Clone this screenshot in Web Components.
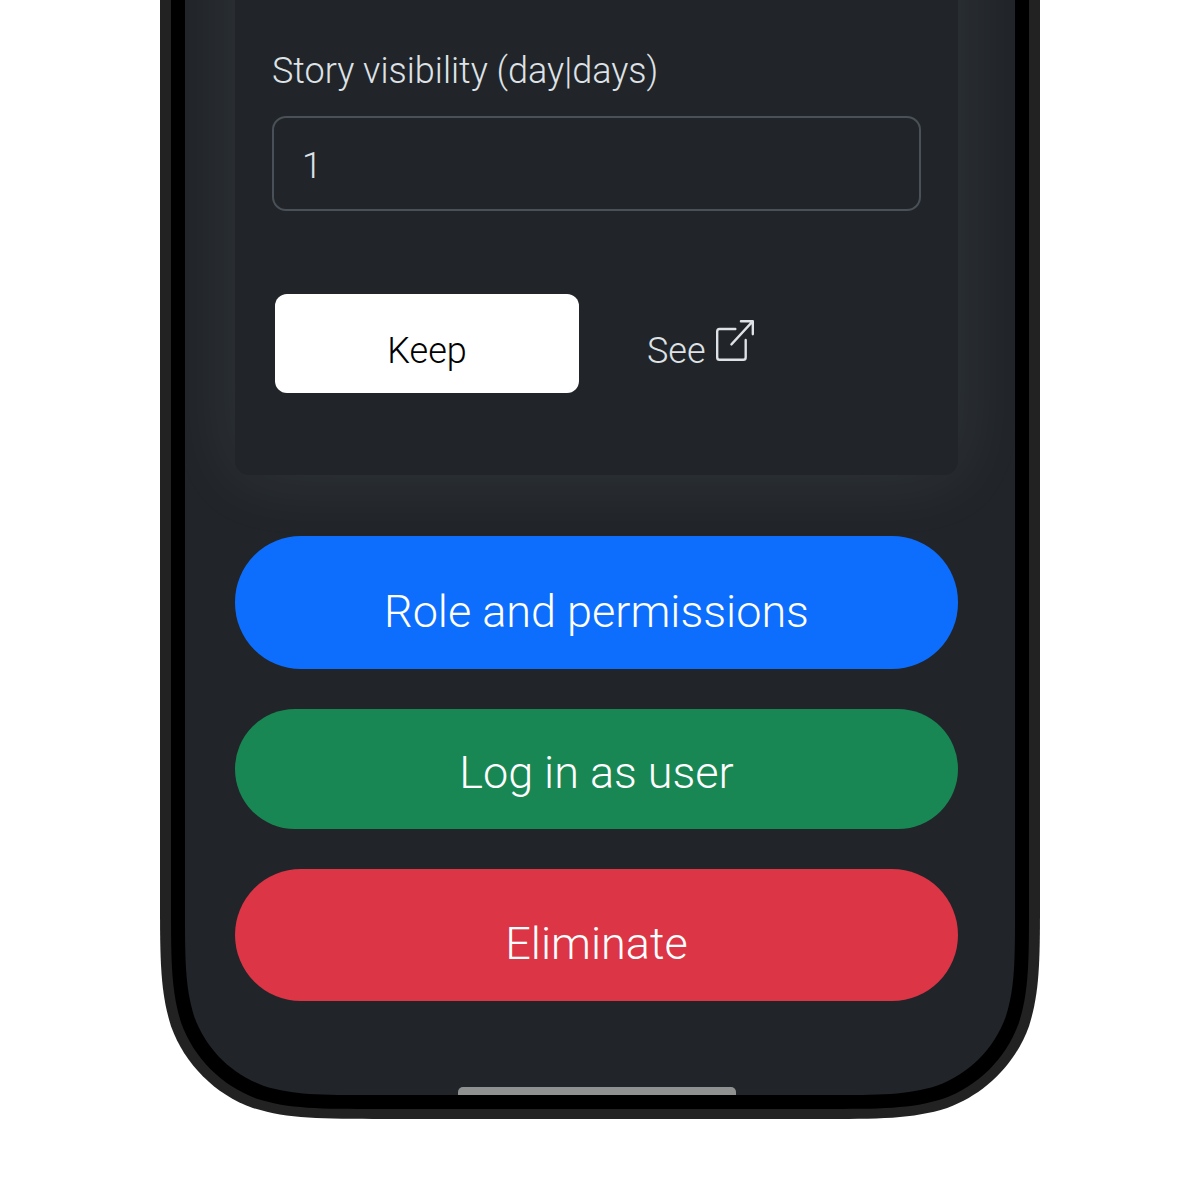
<!DOCTYPE html>
<html lang="en">
<head>
<meta charset="utf-8">
<meta name="viewport" content="width=device-width, initial-scale=1">
<title>User settings</title>
<style>
  body { margin: 0; background: #fff; color: #dee2e6; font-family: Roboto, "Liberation Sans", sans-serif; font-weight: 350; }
</style>
</head>
<body>
<phone-frame>
  <settings-card>
    <text-field label="Story visibility (day|days)" value="1"></text-field>
    <card-actions></card-actions>
  </settings-card>
  <button-stack>
    <pill-button tone="primary">Role and permissions</pill-button>
    <pill-button tone="success">Log in as user</pill-button>
    <pill-button tone="danger">Eliminate</pill-button>
  </button-stack>
</phone-frame>

<script>
  const define = (name, markup, setup) => {
    const template = document.createElement('template');
    template.innerHTML = markup;
    customElements.define(name, class extends HTMLElement {
      constructor() {
        super();
        this.attachShadow({ mode: 'open' }).append(template.content.cloneNode(true));
      }
      connectedCallback() {
        if (setup) setup(this, this.shadowRoot);
      }
    });
  };

  define('phone-frame', `
    <style>
      :host { display: block; box-sizing: border-box; width: min(100%, 880px); margin: 0 auto 80px; }
      .shell { --r: 147px; padding: 0 11px 10px; background: #222; }
      .bezel { --r: 136px; padding: 0 14px 14px; background: #000; }
      .screen { --r: 124px; display: flex; flex-direction: column; overflow: hidden; padding: 0 57px 0 50px; background: #212529; }
      .shell, .bezel, .screen { border-radius: 0 0 var(--r) var(--r); }
      .home { align-self: center; width: 278px; height: 8px; margin-top: 86px; background: #8f9191; border-radius: 5px 5px 0 0; }
      /* Continuous-curvature corners: three curves each, scaled by --r. */
      @supports (clip-path: shape(from 0 0, line to 1px 1px)) {
        .shell, .bezel, .screen {
          border-radius: 0;
          clip-path: shape(from 0 0,
            line to 100% 0,
            line to 100% calc(100% - 1.5287 * var(--r)),
            curve to calc(100% - 0.0749 * var(--r)) calc(100% - 0.6315 * var(--r)) with 100% calc(100% - 1.0884 * var(--r)) / 100% calc(100% - 0.8684 * var(--r)),
            curve to calc(100% - 0.6315 * var(--r)) calc(100% - 0.0749 * var(--r)) with calc(100% - 0.1691 * var(--r)) calc(100% - 0.3724 * var(--r)) / calc(100% - 0.3724 * var(--r)) calc(100% - 0.1691 * var(--r)),
            curve to calc(100% - 1.5287 * var(--r)) 100% with calc(100% - 0.8684 * var(--r)) 100% / calc(100% - 1.0884 * var(--r)) 100%,
            line to calc(1.5287 * var(--r)) 100%,
            curve to calc(0.6315 * var(--r)) calc(100% - 0.0749 * var(--r)) with calc(1.0884 * var(--r)) 100% / calc(0.8684 * var(--r)) 100%,
            curve to calc(0.0749 * var(--r)) calc(100% - 0.6315 * var(--r)) with calc(0.3724 * var(--r)) calc(100% - 0.1691 * var(--r)) / calc(0.1691 * var(--r)) calc(100% - 0.3724 * var(--r)),
            curve to 0 calc(100% - 1.5287 * var(--r)) with 0 calc(100% - 0.8684 * var(--r)) / 0 calc(100% - 1.0884 * var(--r)),
            close);
        }
      }
    </style>
    <div class="shell"><div class="bezel"><main class="screen">
      <slot></slot>
      <div class="home"></div>
    </main></div></div>
  `);

  define('settings-card', `
    <style>
      :host { display: flex; flex-direction: column; gap: 83px; margin-top: -100px; padding: 145px 37px 82px; background: #212529; border-radius: 14px; box-shadow: 0 0 72px rgba(225, 228, 255, .09); }
    </style>
    <slot></slot>
  `);

  define('text-field', `
    <style>
      :host { display: flex; flex-direction: column; gap: 19px; }
      label { font-size: 36px; line-height: 52px; white-space: nowrap; }
      input { box-sizing: border-box; width: 100%; height: 95px; margin: 0; padding: 4px 28px 0; border: 2px solid #495057; border-radius: 14px; background: #212529; color: inherit; font: inherit; font-size: 36px; }
    </style>
    <label for="field"></label>
    <input id="field" type="text" inputmode="numeric">
  `, (host, root) => {
    root.querySelector('label').textContent = host.getAttribute('label');
    root.querySelector('input').value = host.getAttribute('value');
  });

  define('card-actions', `
    <style>
      :host { display: flex; align-items: stretch; gap: 68px; padding-left: 3px; }
      button { width: 304px; height: 99px; margin: 0; padding: 14px 0 0; border: 0; border-radius: 12px; background: #fff; color: #000; font: inherit; font-size: 36px; line-height: 48px; }
      a { display: flex; align-items: center; gap: 10px; color: inherit; font-size: 36px; line-height: 48px; text-decoration: none; }
      span { padding-top: 14px; }
      svg { width: 38px; height: 41px; margin-bottom: 6px; fill: currentColor; }
    </style>
    <button type="button">Keep</button>
    <a href="#"><span>See</span><svg viewBox="0 0 16 16" preserveAspectRatio="none" aria-hidden="true"><path d="M8.636 3.5a.5.5 0 0 0-.5-.5H1.5A1.5 1.5 0 0 0 0 4.500v10A1.500 1.500 0 0 0 1.500 16h10a1.500 1.500 0 0 0 1.500-1.500V7.864a.5.5 0 0 0-1 0V14.500a.5.5 0 0 1-.5.5h-10a.5.5 0 0 1-.5-.5v-10a.5.5 0 0 1 .5-.5h6.636a.5.5 0 0 0 .5-.5"/><path d="M16 .5a.5.5 0 0 0-.5-.5h-5a.5.5 0 0 0 0 1h3.793L6.146 9.146a.5.5 0 1 0 .708.708L15 1.707V5.500a.5.5 0 0 0 1 0z"/></svg></a>
  `);

  define('button-stack', `
    <style>
      :host { display: flex; flex-direction: column; gap: 40px; margin-top: 61px; }
    </style>
    <slot></slot>
  `);

  define('pill-button', `
    <style>
      :host { display: block; --fill: #0d6efd; --top: 46px; --bottom: 27px; }
      :host([tone="success"]) { --fill: #198754; --top: 34px; --bottom: 26px; }
      :host([tone="danger"]) { --fill: #dc3545; --top: 45px; }
      button { display: block; width: 100%; margin: 0; padding: var(--top) 20px var(--bottom); border: 0; border-radius: 66px; background: var(--fill); color: #fff; font: inherit; font-size: 45px; line-height: 60px; }
    </style>
    <button type="button"><slot></slot></button>
  `);
</script>
</body>
</html>
